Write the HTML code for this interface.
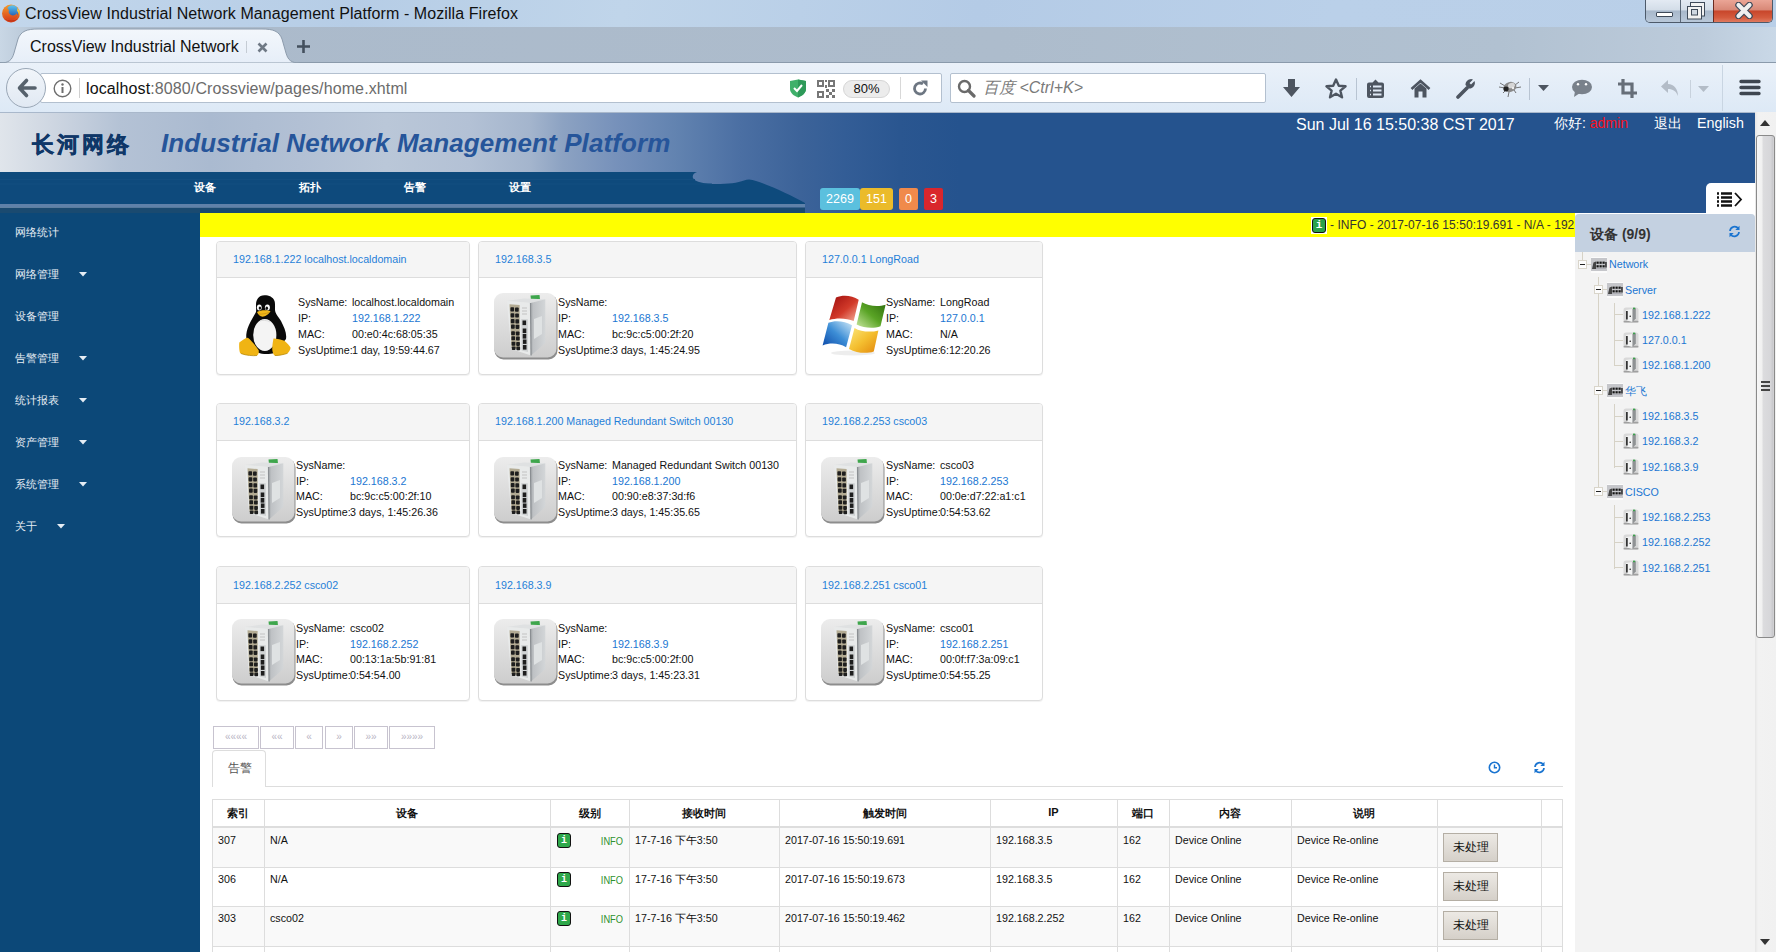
<!DOCTYPE html>
<html><head><meta charset="utf-8">
<style>
*{box-sizing:border-box}
html,body{margin:0;padding:0}
body{width:1776px;height:952px;overflow:hidden;position:relative;font-family:"Liberation Sans",sans-serif;background:#fff;color:#000}
.a{position:absolute}
.nw{white-space:nowrap}
/* chrome */
#titlebar{left:0;top:0;width:1776px;height:27px;background:linear-gradient(100deg,#c3d7ec 0%,#b6cde6 20%,#c0d5ea 35%,#b4cbe6 55%,#bad0e9 75%,#b9cfe8 100%)}
#tabstrip{left:0;top:27px;width:1776px;height:36px;background:linear-gradient(90deg,#c9d7e5 0px,#b9c8d8 30px,#abbacb 80px,#adbccc 1000px,#b1c1d1 1500px,#bccbdb 1700px,#c9d8e7 1776px);border-bottom:1px solid #8a9aab}
#navbar{left:0;top:63px;width:1776px;height:49px;background:linear-gradient(#eaf1f9,#dde9f6)}
/* page */
#header{left:0;top:112px;width:1755px;height:101px;background:linear-gradient(90deg,#e0e5eb 0px,#cfd7e2 50px,#b4c2d5 120px,#aabad0 210px,#b2c0d4 300px,#bac7d8 386px,#b3c1d5 470px,#a4b5cd 530px,#8ca2c2 563px,#7590ba 620px,#6283b0 676px,#4b6fa3 740px,#3c6399 800px,#335d96 845px,#2a5690 900px,#25538e 960px,#25538e 1755px)}
#sidebar{left:0;top:213px;width:200px;height:739px;background:#0c4878}
#yellow{left:200px;top:213px;width:1375px;height:24px;background:#ffff00}
#rpanel{left:1575px;top:214px;width:180px;height:738px;background:#f3f3f3;border-radius:4px 4px 0 0}
#scroll{left:1755px;top:112px;width:21px;height:840px;background:linear-gradient(90deg,#e6e6e6 0,#f2f2f2 3px,#f1f1f1 100%)}
.card{height:134px;border:1px solid #ddd;border-radius:4px;background:#fff;box-shadow:0 1px 1px rgba(0,0,0,.06)}
.ch{height:36px;background:#f5f5f5;border-bottom:1px solid #ddd;border-radius:3px 3px 0 0;position:relative}
.cht{position:absolute;left:16px;top:11px;font-size:10.7px;color:#1f7fd8;white-space:nowrap}
.ct{font-size:10.7px;color:#111;line-height:13px}
.cb{color:#1a76d2}
.pg{height:23px;border:1px solid #c7c3cf;background:#fff;color:#b9b5c4;font-size:10px;line-height:20px;text-align:center;}
.th{font-size:11px;font-weight:bold;text-align:center;color:#111}
.td{font-size:10.7px;color:#111}
.ib{width:14px;height:14px;background:#2ea84a;border:1px solid #111;border-radius:3px;color:#fff;font-size:10px;font-weight:bold;line-height:12px;text-align:center;font-family:"Liberation Mono",monospace}
.btn{width:55px;height:29px;border:1px solid #b4aea4;background:linear-gradient(#ece9e4,#d5d0c9);font-size:12px;line-height:27px;text-align:center;color:#111}
.tl{font-size:10.7px;color:#1a76d2}
</style></head><body>

<div id="titlebar" class="a">
  <svg class="a" style="left:1px;top:3px" width="20" height="20" viewBox="0 0 20 20">
    <defs><linearGradient id="ffg" x1="0" y1="0" x2="0" y2="1"><stop offset="0" stop-color="#5cc6f2"/><stop offset="1" stop-color="#1d4fa8"/></linearGradient>
    <linearGradient id="ffo" x1="0" y1="0" x2="0" y2="1"><stop offset="0" stop-color="#f59a2c"/><stop offset="1" stop-color="#d8401a"/></linearGradient></defs>
    <circle cx="10" cy="10.5" r="9" fill="url(#ffo)"/>
    <ellipse cx="11.3" cy="8.6" rx="6.2" ry="6.4" fill="url(#ffg)"/>
    <path d="M2 9 C3 5 5 3 7 2.5 C6 4 6 6 8 7 C7 9 8 11 10 12 C12 13 15 12 16 10 C17 14 14 17 10 17 C6 17 2.5 14 2 9Z" fill="url(#ffo)"/>
    <path d="M16.5 5 C18.5 7 19.5 10 18.5 13 C18 11 17.5 9 16 8 Z" fill="#f6c640"/>
    <path d="M3 15 C6 19.5 14 19.5 17 15.5 C14 18 7 18.5 3 15Z" fill="#b9301a"/>
  </svg>
  <div class="a nw" style="left:25px;top:5px;font-size:16px;letter-spacing:0.08px;color:#111">CrossView Industrial Network Management Platform - Mozilla Firefox</div>
  <div class="a" style="left:1645px;top:0;width:128px;height:23px;border:1px solid #4d5a6a;border-top:none;border-radius:0 0 5px 5px;overflow:hidden">
    <div class="a" style="left:0;top:0;width:35px;height:22px;background:linear-gradient(#e3eaf3 0%,#d3dde8 45%,#a8b8cb 50%,#b9c8d9 100%);border-right:1px solid #5b6878"></div>
    <div class="a" style="left:35px;top:0;width:33px;height:22px;background:linear-gradient(#e3eaf3 0%,#d3dde8 45%,#a8b8cb 50%,#b9c8d9 100%);border-right:1px solid #6b2a20"></div>
    <div class="a" style="left:68px;top:0;width:60px;height:22px;background:linear-gradient(#eaa596 0%,#d88877 45%,#c8462b 50%,#d45b3e 80%,#e07a60 100%)"></div>
    <div class="a" style="left:10px;top:12px;width:17px;height:5px;background:#fff;border:1px solid #3f4a59;border-radius:1px"></div>
    <svg class="a" style="left:40px;top:0px" width="22" height="21" viewBox="0 0 22 21"><rect x="4.5" y="2.5" width="14" height="13.5" fill="#f2f2f2" stroke="#3f4a59"/><rect x="1.5" y="6.5" width="14" height="12.5" fill="#f2f2f2" stroke="#3f4a59"/><rect x="5.5" y="9.5" width="6" height="5.5" fill="#cfd8e2" stroke="#3f4a59"/></svg>
    
    <svg class="a" style="left:89px;top:2px" width="18" height="17" viewBox="0 0 18 17"><path d="M3.5 3 L14.5 14 M14.5 3 L3.5 14" stroke="#3f4a59" stroke-width="6.5" stroke-linecap="round"/><path d="M3.5 3 L14.5 14 M14.5 3 L3.5 14" stroke="#f0f0f0" stroke-width="4.2" stroke-linecap="round"/></svg>
  </div>
</div>
<div id="tabstrip" class="a">
  <svg class="a" style="left:0;top:0" width="300" height="37" viewBox="0 0 300 37">
    <path d="M0 36 C9 36 12 33 14 26 L18 12 C21 4 27 2 38 2 L262 2 C273 2 279 4 282 12 L286 26 C288 33 291 36 300 36 Z" fill="url(#tabg)" stroke="#8d9cad" stroke-width="1"/>
    <defs><linearGradient id="tabg" x1="0" y1="0" x2="0" y2="1"><stop offset="0" stop-color="#f3f7fc"/><stop offset="1" stop-color="#e6eef8"/></linearGradient></defs>
  </svg>
  <div class="a nw" style="left:30px;top:11px;font-size:16px;color:#111">CrossView Industrial Network</div>
  <div class="a" style="left:246px;top:14px;width:1px;height:12px;background:#c5ccd4"></div>
  <svg class="a" style="left:257px;top:15px" width="11" height="11" viewBox="0 0 11 11"><path d="M1.5 1.5 L9.5 9.5 M9.5 1.5 L1.5 9.5" stroke="#6f7985" stroke-width="2.6"/></svg>
  <svg class="a" style="left:296px;top:12px" width="15" height="15" viewBox="0 0 15 15"><path d="M7.5 1 V14 M1 7.5 H14" stroke="#44505e" stroke-width="2.6"/></svg>
</div>
<div id="navbar" class="a">
  <div class="a" style="left:40px;top:10px;width:902px;height:30px;background:#fff;border:1px solid #b3c0cf;border-radius:2px"></div>
  <div class="a" style="left:6px;top:5px;width:40px;height:40px;border-radius:50%;background:linear-gradient(#f1f5fa,#e1e9f3);border:1px solid #9aa7b6"></div>
  <svg class="a" style="left:16px;top:14px" width="22" height="22" viewBox="0 0 22 22"><path d="M10.5 3.5 L3.5 11 L10.5 18.5 M4.5 11 H19" fill="none" stroke="#56616c" stroke-width="3.6" stroke-linecap="round" stroke-linejoin="round"/></svg>
  <svg class="a" style="left:53px;top:16px" width="19" height="19" viewBox="0 0 19 19"><circle cx="9.5" cy="9.5" r="8.3" fill="none" stroke="#6e6e6e" stroke-width="1.4"/><rect x="8.5" y="8" width="2" height="6" fill="#6e6e6e"/><circle cx="9.5" cy="5.5" r="1.2" fill="#6e6e6e"/></svg>
  <div class="a" style="left:79px;top:15px;width:1px;height:20px;background:#d0d0d0"></div>
  <div class="a nw" style="left:86px;top:17px;font-size:16px;letter-spacing:0.12px;color:#111">localhost<span style="color:#6b6b6b">:8080/Crossview/pages/home.xhtml</span></div>
  <svg class="a" style="left:789px;top:16px" width="18" height="19" viewBox="0 0 18 19"><path d="M1 2 L9 0.5 L17 2 L17 10 C17 14 13 17 9 18.5 C5 17 1 14 1 10 Z" fill="#3fb06a"/><path d="M9 0.5 L17 2 L17 10 C17 14 13 17 9 18.5 Z" fill="#2e9a59"/><path d="M5 9 L8 12 L13 6" fill="none" stroke="#fff" stroke-width="2"/></svg>
  <svg class="a" style="left:817px;top:17px" width="18" height="18" viewBox="0 0 18 18" fill="#777"><path d="M0 0h7v7H0z M2 2v3h3V2z M11 0h7v7h-7z M13 2v3h3V2z M0 11h7v7H0z M2 13v3h3v-3z" fill-rule="evenodd"/><rect x="9" y="9" width="3" height="3"/><rect x="12" y="12" width="3" height="3"/><rect x="15" y="9" width="3" height="3"/><rect x="9" y="15" width="3" height="3"/><rect x="15" y="15" width="3" height="3"/><rect x="8" y="0" width="2" height="2"/><rect x="8" y="5" width="2" height="3"/></svg>
  <div class="a nw" style="left:843px;top:17px;width:47px;height:18px;border-radius:9px;background:#ececec;border:1px solid #d6d6d6;font-size:13px;line-height:16px;text-align:center;color:#111">80%</div>
  <div class="a" style="left:900px;top:14px;width:1px;height:22px;background:#d8d8d8"></div>
  <svg class="a" style="left:912px;top:17px" width="17" height="17" viewBox="0 0 17 17"><path d="M13.5 8.5 A5.5 5.5 0 1 1 11 3.9" fill="none" stroke="#6d7682" stroke-width="2.8"/><path d="M9 0.5 L15.5 0.5 L15.5 7 Z" fill="#6d7682"/></svg>
  <div class="a" style="left:950px;top:10px;width:316px;height:30px;background:#fff;border:1px solid #b3c0cf;border-radius:2px"></div>
  <svg class="a" style="left:957px;top:16px" width="19" height="19" viewBox="0 0 19 19"><circle cx="7.5" cy="7.5" r="5.5" fill="none" stroke="#6a6a6a" stroke-width="2.4"/><path d="M11.5 11.5 L17 17" stroke="#6a6a6a" stroke-width="3.2" stroke-linecap="round"/></svg>
  <div class="a nw" style="left:983px;top:15px;font-size:16px;font-style:italic;color:#7a7a7a">百度 &lt;Ctrl+K&gt;</div>
  <!-- toolbar icons -->
  <svg class="a" style="left:1282px;top:16px" width="19" height="19" viewBox="0 0 19 19"><path d="M6 0 H13 V8 H18 L9.5 18 L1 8 H6 Z" fill="#4d5560"/></svg>
  <svg class="a" style="left:1325px;top:15px" width="22" height="21" viewBox="0 0 22 21"><path d="M11 1.5 L13.8 7.8 L20.5 8.3 L15.4 12.7 L17 19.3 L11 15.8 L5 19.3 L6.6 12.7 L1.5 8.3 L8.2 7.8 Z" fill="none" stroke="#4d5560" stroke-width="2.4" stroke-linejoin="round"/></svg>
  <div class="a" style="left:1356px;top:15px;width:1px;height:22px;background:#b8c4d2"></div>
  <svg class="a" style="left:1366px;top:15px" width="19" height="21" viewBox="0 0 19 21"><path d="M3 4.5 H6.5 L9.5 1.5 L12.5 4.5 H16 A2 2 0 0 1 18 6.5 V18 A2 2 0 0 1 16 20 H3 A2 2 0 0 1 1 18 V6.5 A2 2 0 0 1 3 4.5Z" fill="#4d5560"/><path d="M4 8.5 H5 M4 12.5 H5 M4 16.5 H5" stroke="#dfe9f5" stroke-width="1.6"/><path d="M7 8.5 H15.5 M7 12.5 H15.5 M7 16.5 H15.5" stroke="#dfe9f5" stroke-width="2"/></svg>
  <svg class="a" style="left:1410px;top:16px" width="21" height="19" viewBox="0 0 21 19"><path d="M1.5 10 L10.5 2 L19.5 10" fill="none" stroke="#4d5560" stroke-width="2.6" stroke-linejoin="miter"/><path d="M4.5 9.5 L10.5 4.5 L16.5 9.5 V18.5 H12.5 V12.5 H8.5 V18.5 H4.5 Z" fill="#4d5560"/></svg>
  <svg class="a" style="left:1456px;top:15px" width="20" height="21" viewBox="0 0 20 21"><path d="M2 19 L11 10" stroke="#4d5560" stroke-width="3.6" stroke-linecap="round"/><path d="M9.5 7 A5.5 5.5 0 0 1 17 1.5 L13.5 5 L15 6.5 L18.5 3 A5.5 5.5 0 0 1 13 10.5 Z" fill="#4d5560"/></svg>
  <svg class="a" style="left:1498px;top:14px" width="24" height="22" viewBox="0 0 24 22"><path d="M1 10 L7 11 M2 6 L7 9 M5 16 L8 13 M23 10 L17 11 M21 5 L17 8 M18 16 L16 13 M11 15 L10 20" stroke="#666" stroke-width="0.9"/><ellipse cx="12" cy="10" rx="6.5" ry="5" fill="#8a8a8a" transform="rotate(-15 12 10)"/><ellipse cx="13.5" cy="8.5" rx="3.5" ry="2.6" fill="#d6d6d6" transform="rotate(-15 13.5 8.5)"/><ellipse cx="8" cy="12" rx="2.6" ry="2.4" fill="#222"/><circle cx="15" cy="11" r="1.2" fill="#eee"/></svg>
  <div class="a" style="left:1529px;top:15px;width:1px;height:22px;background:#b8c4d2"></div>
  <svg class="a" style="left:1538px;top:22px" width="11" height="7" viewBox="0 0 11 7"><path d="M0 0 H11 L5.5 6 Z" fill="#4d5560"/></svg>
  <svg class="a" style="left:1571px;top:16px" width="22" height="19" viewBox="0 0 22 19"><ellipse cx="11" cy="8" rx="10" ry="7.3" fill="#79818b"/><path d="M4 12 L3 18 L9 14 Z" fill="#79818b"/><circle cx="7" cy="5.3" r="1.2" fill="#fff"/><circle cx="15" cy="5.3" r="1.2" fill="#fff"/></svg>
  <svg class="a" style="left:1618px;top:16px" width="19" height="19" viewBox="0 0 19 19"><path d="M5 0 V14 H19 M0 5 H14 V19" fill="none" stroke="#666e78" stroke-width="3.2"/></svg>
  <svg class="a" style="left:1660px;top:16px" width="21" height="19" viewBox="0 0 21 19"><path d="M8 1 L1 7.5 L8 14 V10 C13 10 16 12 18 17 C18 10 14 5 8 5 Z" fill="#b3bcc7"/></svg>
  <div class="a" style="left:1690px;top:17px;width:1px;height:18px;background:#c8d2dd"></div>
  <svg class="a" style="left:1698px;top:23px" width="11" height="6" viewBox="0 0 11 6"><path d="M0 0 H11 L5.5 6 Z" fill="#b3bcc7"/></svg>
  <div class="a" style="left:1722px;top:2px;width:1px;height:46px;background:#c9d5e2"></div>
  <svg class="a" style="left:1739px;top:16px" width="22" height="17" viewBox="0 0 22 17"><path d="M2 2.5 H20 M2 8.5 H20 M2 14.5 H20" stroke="#3e4650" stroke-width="3.4" stroke-linecap="round"/></svg>
</div>

<div id="header" class="a">
  <div class="a" style="left:0;top:0;width:1755px;height:1px;background:#a9b8cb"></div>
  <div class="a nw" style="left:32px;top:18px;font-size:22px;font-weight:bold;letter-spacing:3px;-webkit-text-stroke:0.5px #0f3768;color:#0f3768">长河网络</div>
  <div class="a nw" style="left:161px;top:16px;font-size:26px;font-weight:bold;font-style:italic;color:#26559a;letter-spacing:0.1px">Industrial Network Management Platform</div>
  <svg class="a" style="left:0;top:59px" width="810" height="42" viewBox="0 0 810 42">
    <path d="M0 1 H697 C694 2 692 4 693 7 C695 11 705 13 716 13 C728 13 738 12 744 9.5 C748 8 752 8.5 756 10 C772 15 792 25 805 32 L805 33 H0 Z" fill="#0e4a7c"/>
    <path d="M0 8.5 H695 M0 13 H712" stroke="#134e80" stroke-width="1"/>
    <rect x="0" y="33" width="805" height="3.6" fill="#5f81a9"/>
    <rect x="0" y="36.6" width="805" height="5.4" fill="#1a4a70"/>
  </svg>
  <div class="a nw" style="left:194px;top:68px;font-size:11px;font-weight:bold;color:#fff">设备</div>
  <div class="a nw" style="left:299px;top:68px;font-size:11px;font-weight:bold;color:#fff">拓扑</div>
  <div class="a nw" style="left:404px;top:68px;font-size:11px;font-weight:bold;color:#fff">告警</div>
  <div class="a nw" style="left:509px;top:68px;font-size:11px;font-weight:bold;color:#fff">设置</div>
  <div class="a nw" style="left:820px;top:76px;width:40px;height:22px;background:#5bc0de;border-radius:3px;color:#fff;font-size:12.5px;line-height:22px;text-align:center">2269</div>
  <div class="a nw" style="left:860px;top:76px;width:33px;height:22px;background:#ebbb2a;border-radius:3px;color:#fff;font-size:12.5px;line-height:22px;text-align:center">151</div>
  <div class="a nw" style="left:899px;top:76px;width:19px;height:22px;background:#f08a4b;border-radius:2px;color:#fff;font-size:12.5px;line-height:22px;text-align:center">0</div>
  <div class="a nw" style="left:924px;top:76px;width:19px;height:22px;background:#d9262c;border-radius:2px;color:#fff;font-size:12.5px;line-height:22px;text-align:center">3</div>
  <div class="a nw" style="left:1296px;top:4px;font-size:16px;color:#fff">Sun Jul 16 15:50:38 CST 2017</div>
  <div class="a nw" style="left:1554px;top:3px;font-size:14px;color:#fff">你好: <span style="color:#f8101c">admin</span></div>
  <div class="a nw" style="left:1654px;top:3px;font-size:14px;color:#fff">退出</div>
  <div class="a nw" style="left:1697px;top:3px;font-size:14.3px;color:#fff">English</div>
  <div class="a" style="left:1706px;top:71px;width:49px;height:30px;background:#fff;border-radius:5px 0 0 0"></div>
  <svg class="a" style="left:1716px;top:80px" width="28" height="15" viewBox="0 0 28 15"><path d="M1 1.5 H3 M5 1.5 H16 M1 5.5 H3 M5 5.5 H16 M1 9.5 H3 M5 9.5 H16 M1 13.5 H3 M5 13.5 H16" stroke="#111" stroke-width="2.4"/><path d="M19 1 L25 7.5 L19 14" fill="none" stroke="#111" stroke-width="1.8"/></svg>
</div>
<div id="sidebar" class="a"><div class="a nw" style="left:15px;top:12px;font-size:11px;color:#e6edf4">网络统计</div><div class="a nw" style="left:15px;top:54px;font-size:11px;color:#e6edf4">网络管理</div><svg class="a" style="left:79px;top:59px" width="8" height="5" viewBox="0 0 8 5"><path d="M0 0 H8 L4 4.5Z" fill="#e6edf4"/></svg><div class="a nw" style="left:15px;top:96px;font-size:11px;color:#e6edf4">设备管理</div><div class="a nw" style="left:15px;top:138px;font-size:11px;color:#e6edf4">告警管理</div><svg class="a" style="left:79px;top:143px" width="8" height="5" viewBox="0 0 8 5"><path d="M0 0 H8 L4 4.5Z" fill="#e6edf4"/></svg><div class="a nw" style="left:15px;top:180px;font-size:11px;color:#e6edf4">统计报表</div><svg class="a" style="left:79px;top:185px" width="8" height="5" viewBox="0 0 8 5"><path d="M0 0 H8 L4 4.5Z" fill="#e6edf4"/></svg><div class="a nw" style="left:15px;top:222px;font-size:11px;color:#e6edf4">资产管理</div><svg class="a" style="left:79px;top:227px" width="8" height="5" viewBox="0 0 8 5"><path d="M0 0 H8 L4 4.5Z" fill="#e6edf4"/></svg><div class="a nw" style="left:15px;top:264px;font-size:11px;color:#e6edf4">系统管理</div><svg class="a" style="left:79px;top:269px" width="8" height="5" viewBox="0 0 8 5"><path d="M0 0 H8 L4 4.5Z" fill="#e6edf4"/></svg><div class="a nw" style="left:15px;top:306px;font-size:11px;color:#e6edf4">关于</div><svg class="a" style="left:57px;top:311px" width="8" height="5" viewBox="0 0 8 5"><path d="M0 0 H8 L4 4.5Z" fill="#e6edf4"/></svg></div>
<div id="yellow" class="a" style="overflow:hidden">
  <div class="a" style="left:1111px;top:4px;width:16px;height:17px;background:#fff"></div>
  <div class="a" style="left:1112px;top:5px;width:14px;height:15px;background:#2aa14a;border:1px solid #111;border-radius:3px;color:#fff;font-size:11px;font-weight:bold;line-height:13px;text-align:center;font-family:'Liberation Mono',monospace">i</div>
  <div class="a nw" style="left:1130px;top:5px;font-size:12px;letter-spacing:0.05px;color:#333">- INFO - 2017-07-16 15:50:19.691 - N/A - 192.168.3.5 - Device Online</div>
</div>
<!--CARDS-->
<div class="a card" style="left:216px;top:241px;width:254px;"><div class="ch" ><span class="cht" >192.168.1.222 localhost.localdomain</span></div></div>
<svg class="a" style="left:234px;top:293px" width="64" height="66" viewBox="0 0 64 66">
<path d="M30.5 2.3 C24.5 2.3 22 7 22 12 C22 15 22.3 17 22 19 C19 25 13 33 12.3 41.6 C12 46 13 49 14 50 L24 59.5 C28 61.5 36 61.5 40 60 L52 46 C53 40 50 34 47 28 C44 23 41.5 21 41 17 C41 13 41.2 10 40.5 8 C39 4 35 2.3 30.5 2.3Z" fill="#0a0a0a"/>
<ellipse cx="30.8" cy="42" rx="11.6" ry="16" fill="#f4f4f4"/>
<path d="M26 28 C28 27 33 27 36 29" stroke="#d8d8d8" stroke-width="0.8" fill="none"/>
<ellipse cx="25.3" cy="14.4" rx="2.4" ry="3" fill="#fff"/><ellipse cx="33.4" cy="14.6" rx="2.5" ry="3" fill="#fff"/>
<ellipse cx="25.9" cy="15.1" rx="1.2" ry="1.7" fill="#111"/><ellipse cx="32.8" cy="15.3" rx="1.3" ry="1.7" fill="#111"/>
<path d="M23 19 C26 17 33 16.5 36.5 18.3 C35 21 31 23.8 28.6 23.8 C26 23.5 24 21.5 23 19Z" fill="#f2b81a"/>
<path d="M25 21 C28 21.5 32 20.5 35 19.5" stroke="#c08a10" stroke-width="0.6" fill="none"/>
<path d="M5.3 49.4 C8 47.5 11 45 13.9 44.7 C17 47 21 52 24.7 57.2 C25 59.5 24.5 61.5 23.2 62.6 C18 63 10 62 6.1 60.3 C5 57 5 52 5.3 49.4Z" fill="#f0b414"/>
<path d="M39.5 45.5 C43 45.5 47.5 46.5 50.4 47.8 C53 50 55.5 52.5 56.6 54.8 C56.5 57 55 59 53.5 60.3 C49 62 44 62.8 40.3 62.6 C38.5 60 38 57 38.3 54.1 C38.5 51 39 48 39.5 45.5Z" fill="#f0b414"/>
<path d="M7 60.5 C12 62.5 19 63 23 62.5 M41 62.5 C45 62.6 50 61.5 53.5 60.3" stroke="#b88a0a" stroke-width="0.8" fill="none"/>
</svg>
<div class="a nw ct" style="left:298px;top:296px">SysName:</div>
<div class="a nw ct" style="left:352px;top:296px">localhost.localdomain</div>
<div class="a nw ct" style="left:298px;top:312px">IP:</div>
<div class="a nw ct cb" style="left:352px;top:312px">192.168.1.222</div>
<div class="a nw ct" style="left:298px;top:328px">MAC:</div>
<div class="a nw ct" style="left:352px;top:328px">00:e0:4c:68:05:35</div>
<div class="a nw ct" style="left:298px;top:344px">SysUptime:</div>
<div class="a nw ct" style="left:352px;top:344px">1 day, 19:59:44.67</div>
<div class="a card" style="left:478px;top:241px;width:319px;"><div class="ch" ><span class="cht" >192.168.3.5</span></div></div>
<svg class="a" style="left:494px;top:293px" width="64" height="67" viewBox="0 0 64 67">
<defs><linearGradient id="sbg2" x1="0" y1="0" x2="0" y2="1"><stop offset="0" stop-color="#ececec"/><stop offset="1" stop-color="#cdcdcd"/></linearGradient>
<linearGradient id="sside2" x1="0" y1="0" x2="1" y2="0"><stop offset="0" stop-color="#a4a8ab"/><stop offset="0.2" stop-color="#bfc2c5"/><stop offset="1" stop-color="#d3d6d8"/></linearGradient></defs>
<rect x="0.5" y="1.5" width="63" height="65" rx="9" fill="#8d8d8d"/>
<rect x="0" y="0" width="62.5" height="64.5" rx="9" fill="url(#sbg2)"/>
<polygon points="36.5,2.5 45.5,2 46,6.5 37,7" fill="#3ea64c"/>
<polygon points="13,8 30,5.5 51.3,6.3 36.5,10" fill="#dfe1e2"/>
<polygon points="36.5,10 51.3,6.3 51.3,50 37,62.6" fill="url(#sside2)"/>
<polygon points="40,26 48,23 48,41 40,46" fill="#dfe2e3"/>
<polygon points="13,8 36.5,10 37,62.6 17.2,55.9" fill="#e8eaea"/>
<polygon points="15.5,11.3 25.6,12 25.9,57 17.4,54.5" fill="#b3ab93"/>
<polygon points="27.3,26 33.8,26.3 34,59 27.6,57.5" fill="#cfd2d3"/>
<g fill="#1e1e1e">
<rect x="16.4" y="14.3" width="3.7" height="4.2" rx="0.8"/><rect x="21" y="14.5" width="3.7" height="4.2" rx="0.8"/>
<rect x="16.6" y="20.2" width="3.7" height="4.2" rx="0.8"/><rect x="21.2" y="20.4" width="3.7" height="4.2" rx="0.8"/>
<rect x="16.8" y="26.1" width="3.7" height="4.2" rx="0.8"/><rect x="21.4" y="26.3" width="3.7" height="4.2" rx="0.8"/>
<rect x="17" y="31.5" width="3.7" height="4.2" rx="0.8"/><rect x="21.6" y="31.7" width="3.7" height="4.2" rx="0.8"/>
<rect x="17.2" y="38.2" width="3.7" height="4" rx="0.8"/><rect x="21.8" y="38.4" width="3.7" height="4" rx="0.8"/>
<rect x="17.4" y="43.3" width="3.7" height="4" rx="0.8"/><rect x="22" y="43.5" width="3.7" height="4" rx="0.8"/>
<rect x="17.6" y="48.7" width="3.7" height="4" rx="0.8"/><rect x="22.2" y="48.9" width="3.7" height="4" rx="0.8"/>
<rect x="17.8" y="53.4" width="3.7" height="3.6" rx="0.8"/><rect x="22.4" y="53.6" width="3.7" height="3.6" rx="0.8"/>
<rect x="28.5" y="27.5" width="3.6" height="4.6"/>
<rect x="28.7" y="35.5" width="3.6" height="4.6"/><rect x="28.7" y="41" width="3.6" height="4.6"/>
<rect x="28.9" y="46.5" width="3.6" height="4.4"/><rect x="28.9" y="52" width="3.6" height="4.6"/>
</g>
<path d="M28 15 H33 M28 18 H33 M28 21 H33" stroke="#aaa" stroke-width="0.6"/>
<path d="M36.5 10 L37 62.6" stroke="#8a8e92" stroke-width="1.2"/>
</svg>
<div class="a nw ct" style="left:558px;top:296px">SysName:</div>
<div class="a nw ct" style="left:612px;top:296px"></div>
<div class="a nw ct" style="left:558px;top:312px">IP:</div>
<div class="a nw ct cb" style="left:612px;top:312px">192.168.3.5</div>
<div class="a nw ct" style="left:558px;top:328px">MAC:</div>
<div class="a nw ct" style="left:612px;top:328px">bc:9c:c5:00:2f:20</div>
<div class="a nw ct" style="left:558px;top:344px">SysUptime:</div>
<div class="a nw ct" style="left:612px;top:344px">3 days, 1:45:24.95</div>
<div class="a card" style="left:805px;top:241px;width:238px;"><div class="ch" ><span class="cht" >127.0.0.1 LongRoad</span></div></div>
<svg class="a" style="left:820px;top:292px" width="68" height="66" viewBox="0 0 68 66">
<defs>
<linearGradient id="wr3" x1="0" y1="0" x2="1" y2="1"><stop offset="0" stop-color="#9c0c0c"/><stop offset="0.55" stop-color="#d23a2a"/><stop offset="1" stop-color="#f6b4a0"/></linearGradient>
<linearGradient id="wg3" x1="1" y1="0" x2="0" y2="1"><stop offset="0" stop-color="#2f6e0c"/><stop offset="0.5" stop-color="#5aa426"/><stop offset="1" stop-color="#c8e6a0"/></linearGradient>
<linearGradient id="wb3" x1="0" y1="1" x2="1" y2="0"><stop offset="0" stop-color="#0b48a8"/><stop offset="0.5" stop-color="#3d8ed6"/><stop offset="1" stop-color="#cfe9f8"/></linearGradient>
<linearGradient id="wy3" x1="0" y1="0" x2="1" y2="1"><stop offset="0" stop-color="#fbe67a"/><stop offset="0.5" stop-color="#f4bf30"/><stop offset="1" stop-color="#e2870c"/></linearGradient>
</defs>
<ellipse cx="33" cy="61" rx="22" ry="2.5" fill="#000" opacity="0.07"/>
<path d="M16 5.6 C23 2.5 32 3.5 38.7 7.7 L33.7 29.1 C27 26 17 25.5 9.3 27.9 Z" fill="url(#wr3)"/>
<path d="M42 10.2 C48 14 58 15 65.6 12.7 L60.5 34.2 C53 37 44 36 36.6 32.5 Z" fill="url(#wg3)"/>
<path d="M8.4 30.8 C15 28 25 29 32 33.3 L26.1 55.2 C19 51 10 50.5 2.6 53.5 Z" fill="url(#wb3)"/>
<path d="M34.5 35.9 C41 40 51 40.5 58.4 38.4 L53.8 59.4 C46 62 37 61 29 56.9 Z" fill="url(#wy3)"/>
</svg>
<div class="a nw ct" style="left:886px;top:296px">SysName:</div>
<div class="a nw ct" style="left:940px;top:296px">LongRoad</div>
<div class="a nw ct" style="left:886px;top:312px">IP:</div>
<div class="a nw ct cb" style="left:940px;top:312px">127.0.0.1</div>
<div class="a nw ct" style="left:886px;top:328px">MAC:</div>
<div class="a nw ct" style="left:940px;top:328px">N/A</div>
<div class="a nw ct" style="left:886px;top:344px">SysUptime:</div>
<div class="a nw ct" style="left:940px;top:344px">6:12:20.26</div>
<div class="a card" style="left:216px;top:403px;width:254px;"><div class="ch" style="height:37px"><span class="cht" >192.168.3.2</span></div></div>
<svg class="a" style="left:232px;top:457px" width="64" height="67" viewBox="0 0 64 67">
<defs><linearGradient id="sbg4" x1="0" y1="0" x2="0" y2="1"><stop offset="0" stop-color="#ececec"/><stop offset="1" stop-color="#cdcdcd"/></linearGradient>
<linearGradient id="sside4" x1="0" y1="0" x2="1" y2="0"><stop offset="0" stop-color="#a4a8ab"/><stop offset="0.2" stop-color="#bfc2c5"/><stop offset="1" stop-color="#d3d6d8"/></linearGradient></defs>
<rect x="0.5" y="1.5" width="63" height="65" rx="9" fill="#8d8d8d"/>
<rect x="0" y="0" width="62.5" height="64.5" rx="9" fill="url(#sbg4)"/>
<polygon points="36.5,2.5 45.5,2 46,6.5 37,7" fill="#3ea64c"/>
<polygon points="13,8 30,5.5 51.3,6.3 36.5,10" fill="#dfe1e2"/>
<polygon points="36.5,10 51.3,6.3 51.3,50 37,62.6" fill="url(#sside4)"/>
<polygon points="40,26 48,23 48,41 40,46" fill="#dfe2e3"/>
<polygon points="13,8 36.5,10 37,62.6 17.2,55.9" fill="#e8eaea"/>
<polygon points="15.5,11.3 25.6,12 25.9,57 17.4,54.5" fill="#b3ab93"/>
<polygon points="27.3,26 33.8,26.3 34,59 27.6,57.5" fill="#cfd2d3"/>
<g fill="#1e1e1e">
<rect x="16.4" y="14.3" width="3.7" height="4.2" rx="0.8"/><rect x="21" y="14.5" width="3.7" height="4.2" rx="0.8"/>
<rect x="16.6" y="20.2" width="3.7" height="4.2" rx="0.8"/><rect x="21.2" y="20.4" width="3.7" height="4.2" rx="0.8"/>
<rect x="16.8" y="26.1" width="3.7" height="4.2" rx="0.8"/><rect x="21.4" y="26.3" width="3.7" height="4.2" rx="0.8"/>
<rect x="17" y="31.5" width="3.7" height="4.2" rx="0.8"/><rect x="21.6" y="31.7" width="3.7" height="4.2" rx="0.8"/>
<rect x="17.2" y="38.2" width="3.7" height="4" rx="0.8"/><rect x="21.8" y="38.4" width="3.7" height="4" rx="0.8"/>
<rect x="17.4" y="43.3" width="3.7" height="4" rx="0.8"/><rect x="22" y="43.5" width="3.7" height="4" rx="0.8"/>
<rect x="17.6" y="48.7" width="3.7" height="4" rx="0.8"/><rect x="22.2" y="48.9" width="3.7" height="4" rx="0.8"/>
<rect x="17.8" y="53.4" width="3.7" height="3.6" rx="0.8"/><rect x="22.4" y="53.6" width="3.7" height="3.6" rx="0.8"/>
<rect x="28.5" y="27.5" width="3.6" height="4.6"/>
<rect x="28.7" y="35.5" width="3.6" height="4.6"/><rect x="28.7" y="41" width="3.6" height="4.6"/>
<rect x="28.9" y="46.5" width="3.6" height="4.4"/><rect x="28.9" y="52" width="3.6" height="4.6"/>
</g>
<path d="M28 15 H33 M28 18 H33 M28 21 H33" stroke="#aaa" stroke-width="0.6"/>
<path d="M36.5 10 L37 62.6" stroke="#8a8e92" stroke-width="1.2"/>
</svg>
<div class="a nw ct" style="left:296px;top:459px">SysName:</div>
<div class="a nw ct" style="left:350px;top:459px"></div>
<div class="a nw ct" style="left:296px;top:475px">IP:</div>
<div class="a nw ct cb" style="left:350px;top:475px">192.168.3.2</div>
<div class="a nw ct" style="left:296px;top:490px">MAC:</div>
<div class="a nw ct" style="left:350px;top:490px">bc:9c:c5:00:2f:10</div>
<div class="a nw ct" style="left:296px;top:506px">SysUptime:</div>
<div class="a nw ct" style="left:350px;top:506px">3 days, 1:45:26.36</div>
<div class="a card" style="left:478px;top:403px;width:319px;"><div class="ch" style="height:37px"><span class="cht" >192.168.1.200 Managed Redundant Switch 00130</span></div></div>
<svg class="a" style="left:494px;top:457px" width="64" height="67" viewBox="0 0 64 67">
<defs><linearGradient id="sbg5" x1="0" y1="0" x2="0" y2="1"><stop offset="0" stop-color="#ececec"/><stop offset="1" stop-color="#cdcdcd"/></linearGradient>
<linearGradient id="sside5" x1="0" y1="0" x2="1" y2="0"><stop offset="0" stop-color="#a4a8ab"/><stop offset="0.2" stop-color="#bfc2c5"/><stop offset="1" stop-color="#d3d6d8"/></linearGradient></defs>
<rect x="0.5" y="1.5" width="63" height="65" rx="9" fill="#8d8d8d"/>
<rect x="0" y="0" width="62.5" height="64.5" rx="9" fill="url(#sbg5)"/>
<polygon points="36.5,2.5 45.5,2 46,6.5 37,7" fill="#3ea64c"/>
<polygon points="13,8 30,5.5 51.3,6.3 36.5,10" fill="#dfe1e2"/>
<polygon points="36.5,10 51.3,6.3 51.3,50 37,62.6" fill="url(#sside5)"/>
<polygon points="40,26 48,23 48,41 40,46" fill="#dfe2e3"/>
<polygon points="13,8 36.5,10 37,62.6 17.2,55.9" fill="#e8eaea"/>
<polygon points="15.5,11.3 25.6,12 25.9,57 17.4,54.5" fill="#b3ab93"/>
<polygon points="27.3,26 33.8,26.3 34,59 27.6,57.5" fill="#cfd2d3"/>
<g fill="#1e1e1e">
<rect x="16.4" y="14.3" width="3.7" height="4.2" rx="0.8"/><rect x="21" y="14.5" width="3.7" height="4.2" rx="0.8"/>
<rect x="16.6" y="20.2" width="3.7" height="4.2" rx="0.8"/><rect x="21.2" y="20.4" width="3.7" height="4.2" rx="0.8"/>
<rect x="16.8" y="26.1" width="3.7" height="4.2" rx="0.8"/><rect x="21.4" y="26.3" width="3.7" height="4.2" rx="0.8"/>
<rect x="17" y="31.5" width="3.7" height="4.2" rx="0.8"/><rect x="21.6" y="31.7" width="3.7" height="4.2" rx="0.8"/>
<rect x="17.2" y="38.2" width="3.7" height="4" rx="0.8"/><rect x="21.8" y="38.4" width="3.7" height="4" rx="0.8"/>
<rect x="17.4" y="43.3" width="3.7" height="4" rx="0.8"/><rect x="22" y="43.5" width="3.7" height="4" rx="0.8"/>
<rect x="17.6" y="48.7" width="3.7" height="4" rx="0.8"/><rect x="22.2" y="48.9" width="3.7" height="4" rx="0.8"/>
<rect x="17.8" y="53.4" width="3.7" height="3.6" rx="0.8"/><rect x="22.4" y="53.6" width="3.7" height="3.6" rx="0.8"/>
<rect x="28.5" y="27.5" width="3.6" height="4.6"/>
<rect x="28.7" y="35.5" width="3.6" height="4.6"/><rect x="28.7" y="41" width="3.6" height="4.6"/>
<rect x="28.9" y="46.5" width="3.6" height="4.4"/><rect x="28.9" y="52" width="3.6" height="4.6"/>
</g>
<path d="M28 15 H33 M28 18 H33 M28 21 H33" stroke="#aaa" stroke-width="0.6"/>
<path d="M36.5 10 L37 62.6" stroke="#8a8e92" stroke-width="1.2"/>
</svg>
<div class="a nw ct" style="left:558px;top:459px">SysName:</div>
<div class="a nw ct" style="left:612px;top:459px">Managed Redundant Switch 00130</div>
<div class="a nw ct" style="left:558px;top:475px">IP:</div>
<div class="a nw ct cb" style="left:612px;top:475px">192.168.1.200</div>
<div class="a nw ct" style="left:558px;top:490px">MAC:</div>
<div class="a nw ct" style="left:612px;top:490px">00:90:e8:37:3d:f6</div>
<div class="a nw ct" style="left:558px;top:506px">SysUptime:</div>
<div class="a nw ct" style="left:612px;top:506px">3 days, 1:45:35.65</div>
<div class="a card" style="left:805px;top:403px;width:238px;"><div class="ch" style="height:37px"><span class="cht" >192.168.2.253 csco03</span></div></div>
<svg class="a" style="left:821px;top:457px" width="64" height="67" viewBox="0 0 64 67">
<defs><linearGradient id="sbg6" x1="0" y1="0" x2="0" y2="1"><stop offset="0" stop-color="#ececec"/><stop offset="1" stop-color="#cdcdcd"/></linearGradient>
<linearGradient id="sside6" x1="0" y1="0" x2="1" y2="0"><stop offset="0" stop-color="#a4a8ab"/><stop offset="0.2" stop-color="#bfc2c5"/><stop offset="1" stop-color="#d3d6d8"/></linearGradient></defs>
<rect x="0.5" y="1.5" width="63" height="65" rx="9" fill="#8d8d8d"/>
<rect x="0" y="0" width="62.5" height="64.5" rx="9" fill="url(#sbg6)"/>
<polygon points="36.5,2.5 45.5,2 46,6.5 37,7" fill="#3ea64c"/>
<polygon points="13,8 30,5.5 51.3,6.3 36.5,10" fill="#dfe1e2"/>
<polygon points="36.5,10 51.3,6.3 51.3,50 37,62.6" fill="url(#sside6)"/>
<polygon points="40,26 48,23 48,41 40,46" fill="#dfe2e3"/>
<polygon points="13,8 36.5,10 37,62.6 17.2,55.9" fill="#e8eaea"/>
<polygon points="15.5,11.3 25.6,12 25.9,57 17.4,54.5" fill="#b3ab93"/>
<polygon points="27.3,26 33.8,26.3 34,59 27.6,57.5" fill="#cfd2d3"/>
<g fill="#1e1e1e">
<rect x="16.4" y="14.3" width="3.7" height="4.2" rx="0.8"/><rect x="21" y="14.5" width="3.7" height="4.2" rx="0.8"/>
<rect x="16.6" y="20.2" width="3.7" height="4.2" rx="0.8"/><rect x="21.2" y="20.4" width="3.7" height="4.2" rx="0.8"/>
<rect x="16.8" y="26.1" width="3.7" height="4.2" rx="0.8"/><rect x="21.4" y="26.3" width="3.7" height="4.2" rx="0.8"/>
<rect x="17" y="31.5" width="3.7" height="4.2" rx="0.8"/><rect x="21.6" y="31.7" width="3.7" height="4.2" rx="0.8"/>
<rect x="17.2" y="38.2" width="3.7" height="4" rx="0.8"/><rect x="21.8" y="38.4" width="3.7" height="4" rx="0.8"/>
<rect x="17.4" y="43.3" width="3.7" height="4" rx="0.8"/><rect x="22" y="43.5" width="3.7" height="4" rx="0.8"/>
<rect x="17.6" y="48.7" width="3.7" height="4" rx="0.8"/><rect x="22.2" y="48.9" width="3.7" height="4" rx="0.8"/>
<rect x="17.8" y="53.4" width="3.7" height="3.6" rx="0.8"/><rect x="22.4" y="53.6" width="3.7" height="3.6" rx="0.8"/>
<rect x="28.5" y="27.5" width="3.6" height="4.6"/>
<rect x="28.7" y="35.5" width="3.6" height="4.6"/><rect x="28.7" y="41" width="3.6" height="4.6"/>
<rect x="28.9" y="46.5" width="3.6" height="4.4"/><rect x="28.9" y="52" width="3.6" height="4.6"/>
</g>
<path d="M28 15 H33 M28 18 H33 M28 21 H33" stroke="#aaa" stroke-width="0.6"/>
<path d="M36.5 10 L37 62.6" stroke="#8a8e92" stroke-width="1.2"/>
</svg>
<div class="a nw ct" style="left:886px;top:459px">SysName:</div>
<div class="a nw ct" style="left:940px;top:459px">csco03</div>
<div class="a nw ct" style="left:886px;top:475px">IP:</div>
<div class="a nw ct cb" style="left:940px;top:475px">192.168.2.253</div>
<div class="a nw ct" style="left:886px;top:490px">MAC:</div>
<div class="a nw ct" style="left:940px;top:490px">00:0e:d7:22:a1:c1</div>
<div class="a nw ct" style="left:886px;top:506px">SysUptime:</div>
<div class="a nw ct" style="left:940px;top:506px">0:54:53.62</div>
<div class="a card" style="left:216px;top:566px;width:254px;height:135px;"><div class="ch" style="height:37px"><span class="cht" style="top:12px">192.168.2.252 csco02</span></div></div>
<svg class="a" style="left:232px;top:619px" width="64" height="67" viewBox="0 0 64 67">
<defs><linearGradient id="sbg7" x1="0" y1="0" x2="0" y2="1"><stop offset="0" stop-color="#ececec"/><stop offset="1" stop-color="#cdcdcd"/></linearGradient>
<linearGradient id="sside7" x1="0" y1="0" x2="1" y2="0"><stop offset="0" stop-color="#a4a8ab"/><stop offset="0.2" stop-color="#bfc2c5"/><stop offset="1" stop-color="#d3d6d8"/></linearGradient></defs>
<rect x="0.5" y="1.5" width="63" height="65" rx="9" fill="#8d8d8d"/>
<rect x="0" y="0" width="62.5" height="64.5" rx="9" fill="url(#sbg7)"/>
<polygon points="36.5,2.5 45.5,2 46,6.5 37,7" fill="#3ea64c"/>
<polygon points="13,8 30,5.5 51.3,6.3 36.5,10" fill="#dfe1e2"/>
<polygon points="36.5,10 51.3,6.3 51.3,50 37,62.6" fill="url(#sside7)"/>
<polygon points="40,26 48,23 48,41 40,46" fill="#dfe2e3"/>
<polygon points="13,8 36.5,10 37,62.6 17.2,55.9" fill="#e8eaea"/>
<polygon points="15.5,11.3 25.6,12 25.9,57 17.4,54.5" fill="#b3ab93"/>
<polygon points="27.3,26 33.8,26.3 34,59 27.6,57.5" fill="#cfd2d3"/>
<g fill="#1e1e1e">
<rect x="16.4" y="14.3" width="3.7" height="4.2" rx="0.8"/><rect x="21" y="14.5" width="3.7" height="4.2" rx="0.8"/>
<rect x="16.6" y="20.2" width="3.7" height="4.2" rx="0.8"/><rect x="21.2" y="20.4" width="3.7" height="4.2" rx="0.8"/>
<rect x="16.8" y="26.1" width="3.7" height="4.2" rx="0.8"/><rect x="21.4" y="26.3" width="3.7" height="4.2" rx="0.8"/>
<rect x="17" y="31.5" width="3.7" height="4.2" rx="0.8"/><rect x="21.6" y="31.7" width="3.7" height="4.2" rx="0.8"/>
<rect x="17.2" y="38.2" width="3.7" height="4" rx="0.8"/><rect x="21.8" y="38.4" width="3.7" height="4" rx="0.8"/>
<rect x="17.4" y="43.3" width="3.7" height="4" rx="0.8"/><rect x="22" y="43.5" width="3.7" height="4" rx="0.8"/>
<rect x="17.6" y="48.7" width="3.7" height="4" rx="0.8"/><rect x="22.2" y="48.9" width="3.7" height="4" rx="0.8"/>
<rect x="17.8" y="53.4" width="3.7" height="3.6" rx="0.8"/><rect x="22.4" y="53.6" width="3.7" height="3.6" rx="0.8"/>
<rect x="28.5" y="27.5" width="3.6" height="4.6"/>
<rect x="28.7" y="35.5" width="3.6" height="4.6"/><rect x="28.7" y="41" width="3.6" height="4.6"/>
<rect x="28.9" y="46.5" width="3.6" height="4.4"/><rect x="28.9" y="52" width="3.6" height="4.6"/>
</g>
<path d="M28 15 H33 M28 18 H33 M28 21 H33" stroke="#aaa" stroke-width="0.6"/>
<path d="M36.5 10 L37 62.6" stroke="#8a8e92" stroke-width="1.2"/>
</svg>
<div class="a nw ct" style="left:296px;top:622px">SysName:</div>
<div class="a nw ct" style="left:350px;top:622px">csco02</div>
<div class="a nw ct" style="left:296px;top:638px">IP:</div>
<div class="a nw ct cb" style="left:350px;top:638px">192.168.2.252</div>
<div class="a nw ct" style="left:296px;top:653px">MAC:</div>
<div class="a nw ct" style="left:350px;top:653px">00:13:1a:5b:91:81</div>
<div class="a nw ct" style="left:296px;top:669px">SysUptime:</div>
<div class="a nw ct" style="left:350px;top:669px">0:54:54.00</div>
<div class="a card" style="left:478px;top:566px;width:319px;height:135px;"><div class="ch" style="height:37px"><span class="cht" style="top:12px">192.168.3.9</span></div></div>
<svg class="a" style="left:494px;top:619px" width="64" height="67" viewBox="0 0 64 67">
<defs><linearGradient id="sbg8" x1="0" y1="0" x2="0" y2="1"><stop offset="0" stop-color="#ececec"/><stop offset="1" stop-color="#cdcdcd"/></linearGradient>
<linearGradient id="sside8" x1="0" y1="0" x2="1" y2="0"><stop offset="0" stop-color="#a4a8ab"/><stop offset="0.2" stop-color="#bfc2c5"/><stop offset="1" stop-color="#d3d6d8"/></linearGradient></defs>
<rect x="0.5" y="1.5" width="63" height="65" rx="9" fill="#8d8d8d"/>
<rect x="0" y="0" width="62.5" height="64.5" rx="9" fill="url(#sbg8)"/>
<polygon points="36.5,2.5 45.5,2 46,6.5 37,7" fill="#3ea64c"/>
<polygon points="13,8 30,5.5 51.3,6.3 36.5,10" fill="#dfe1e2"/>
<polygon points="36.5,10 51.3,6.3 51.3,50 37,62.6" fill="url(#sside8)"/>
<polygon points="40,26 48,23 48,41 40,46" fill="#dfe2e3"/>
<polygon points="13,8 36.5,10 37,62.6 17.2,55.9" fill="#e8eaea"/>
<polygon points="15.5,11.3 25.6,12 25.9,57 17.4,54.5" fill="#b3ab93"/>
<polygon points="27.3,26 33.8,26.3 34,59 27.6,57.5" fill="#cfd2d3"/>
<g fill="#1e1e1e">
<rect x="16.4" y="14.3" width="3.7" height="4.2" rx="0.8"/><rect x="21" y="14.5" width="3.7" height="4.2" rx="0.8"/>
<rect x="16.6" y="20.2" width="3.7" height="4.2" rx="0.8"/><rect x="21.2" y="20.4" width="3.7" height="4.2" rx="0.8"/>
<rect x="16.8" y="26.1" width="3.7" height="4.2" rx="0.8"/><rect x="21.4" y="26.3" width="3.7" height="4.2" rx="0.8"/>
<rect x="17" y="31.5" width="3.7" height="4.2" rx="0.8"/><rect x="21.6" y="31.7" width="3.7" height="4.2" rx="0.8"/>
<rect x="17.2" y="38.2" width="3.7" height="4" rx="0.8"/><rect x="21.8" y="38.4" width="3.7" height="4" rx="0.8"/>
<rect x="17.4" y="43.3" width="3.7" height="4" rx="0.8"/><rect x="22" y="43.5" width="3.7" height="4" rx="0.8"/>
<rect x="17.6" y="48.7" width="3.7" height="4" rx="0.8"/><rect x="22.2" y="48.9" width="3.7" height="4" rx="0.8"/>
<rect x="17.8" y="53.4" width="3.7" height="3.6" rx="0.8"/><rect x="22.4" y="53.6" width="3.7" height="3.6" rx="0.8"/>
<rect x="28.5" y="27.5" width="3.6" height="4.6"/>
<rect x="28.7" y="35.5" width="3.6" height="4.6"/><rect x="28.7" y="41" width="3.6" height="4.6"/>
<rect x="28.9" y="46.5" width="3.6" height="4.4"/><rect x="28.9" y="52" width="3.6" height="4.6"/>
</g>
<path d="M28 15 H33 M28 18 H33 M28 21 H33" stroke="#aaa" stroke-width="0.6"/>
<path d="M36.5 10 L37 62.6" stroke="#8a8e92" stroke-width="1.2"/>
</svg>
<div class="a nw ct" style="left:558px;top:622px">SysName:</div>
<div class="a nw ct" style="left:612px;top:622px"></div>
<div class="a nw ct" style="left:558px;top:638px">IP:</div>
<div class="a nw ct cb" style="left:612px;top:638px">192.168.3.9</div>
<div class="a nw ct" style="left:558px;top:653px">MAC:</div>
<div class="a nw ct" style="left:612px;top:653px">bc:9c:c5:00:2f:00</div>
<div class="a nw ct" style="left:558px;top:669px">SysUptime:</div>
<div class="a nw ct" style="left:612px;top:669px">3 days, 1:45:23.31</div>
<div class="a card" style="left:805px;top:566px;width:238px;height:135px;"><div class="ch" style="height:37px"><span class="cht" style="top:12px">192.168.2.251 csco01</span></div></div>
<svg class="a" style="left:821px;top:619px" width="64" height="67" viewBox="0 0 64 67">
<defs><linearGradient id="sbg9" x1="0" y1="0" x2="0" y2="1"><stop offset="0" stop-color="#ececec"/><stop offset="1" stop-color="#cdcdcd"/></linearGradient>
<linearGradient id="sside9" x1="0" y1="0" x2="1" y2="0"><stop offset="0" stop-color="#a4a8ab"/><stop offset="0.2" stop-color="#bfc2c5"/><stop offset="1" stop-color="#d3d6d8"/></linearGradient></defs>
<rect x="0.5" y="1.5" width="63" height="65" rx="9" fill="#8d8d8d"/>
<rect x="0" y="0" width="62.5" height="64.5" rx="9" fill="url(#sbg9)"/>
<polygon points="36.5,2.5 45.5,2 46,6.5 37,7" fill="#3ea64c"/>
<polygon points="13,8 30,5.5 51.3,6.3 36.5,10" fill="#dfe1e2"/>
<polygon points="36.5,10 51.3,6.3 51.3,50 37,62.6" fill="url(#sside9)"/>
<polygon points="40,26 48,23 48,41 40,46" fill="#dfe2e3"/>
<polygon points="13,8 36.5,10 37,62.6 17.2,55.9" fill="#e8eaea"/>
<polygon points="15.5,11.3 25.6,12 25.9,57 17.4,54.5" fill="#b3ab93"/>
<polygon points="27.3,26 33.8,26.3 34,59 27.6,57.5" fill="#cfd2d3"/>
<g fill="#1e1e1e">
<rect x="16.4" y="14.3" width="3.7" height="4.2" rx="0.8"/><rect x="21" y="14.5" width="3.7" height="4.2" rx="0.8"/>
<rect x="16.6" y="20.2" width="3.7" height="4.2" rx="0.8"/><rect x="21.2" y="20.4" width="3.7" height="4.2" rx="0.8"/>
<rect x="16.8" y="26.1" width="3.7" height="4.2" rx="0.8"/><rect x="21.4" y="26.3" width="3.7" height="4.2" rx="0.8"/>
<rect x="17" y="31.5" width="3.7" height="4.2" rx="0.8"/><rect x="21.6" y="31.7" width="3.7" height="4.2" rx="0.8"/>
<rect x="17.2" y="38.2" width="3.7" height="4" rx="0.8"/><rect x="21.8" y="38.4" width="3.7" height="4" rx="0.8"/>
<rect x="17.4" y="43.3" width="3.7" height="4" rx="0.8"/><rect x="22" y="43.5" width="3.7" height="4" rx="0.8"/>
<rect x="17.6" y="48.7" width="3.7" height="4" rx="0.8"/><rect x="22.2" y="48.9" width="3.7" height="4" rx="0.8"/>
<rect x="17.8" y="53.4" width="3.7" height="3.6" rx="0.8"/><rect x="22.4" y="53.6" width="3.7" height="3.6" rx="0.8"/>
<rect x="28.5" y="27.5" width="3.6" height="4.6"/>
<rect x="28.7" y="35.5" width="3.6" height="4.6"/><rect x="28.7" y="41" width="3.6" height="4.6"/>
<rect x="28.9" y="46.5" width="3.6" height="4.4"/><rect x="28.9" y="52" width="3.6" height="4.6"/>
</g>
<path d="M28 15 H33 M28 18 H33 M28 21 H33" stroke="#aaa" stroke-width="0.6"/>
<path d="M36.5 10 L37 62.6" stroke="#8a8e92" stroke-width="1.2"/>
</svg>
<div class="a nw ct" style="left:886px;top:622px">SysName:</div>
<div class="a nw ct" style="left:940px;top:622px">csco01</div>
<div class="a nw ct" style="left:886px;top:638px">IP:</div>
<div class="a nw ct cb" style="left:940px;top:638px">192.168.2.251</div>
<div class="a nw ct" style="left:886px;top:653px">MAC:</div>
<div class="a nw ct" style="left:940px;top:653px">00:0f:f7:3a:09:c1</div>
<div class="a nw ct" style="left:886px;top:669px">SysUptime:</div>
<div class="a nw ct" style="left:940px;top:669px">0:54:55.25</div>
<!--/CARDS-->
<!--TABLE-->
<div class="a pg" style="left:213px;top:726px;width:46px">««««</div>
<div class="a pg" style="left:260px;top:726px;width:34px">««</div>
<div class="a pg" style="left:295px;top:726px;width:28px">«</div>
<div class="a pg" style="left:325px;top:726px;width:28px">»</div>
<div class="a pg" style="left:354px;top:726px;width:34px">»»</div>
<div class="a pg" style="left:389px;top:726px;width:46px">»»»»</div>
<div class="a" style="left:265px;top:786px;width:1298px;height:1px;background:#ddd"></div>
<div class="a" style="left:212px;top:750px;width:54px;height:37px;border:1px solid #ddd;border-bottom:none;border-radius:4px 4px 0 0;background:#fff"></div>
<div class="a nw" style="left:228px;top:760px;font-size:12px;color:#555">告警</div>
<svg class="a" style="left:1488px;top:761px" width="13" height="13" viewBox="0 0 13 13"><circle cx="6.5" cy="6.5" r="5.2" fill="none" stroke="#1a74d0" stroke-width="1.6"/><path d="M6.5 3.5 V6.8 H9" fill="none" stroke="#1a74d0" stroke-width="1.4"/></svg>
<svg class="a" style="left:1533px;top:761px" width="13" height="13" viewBox="0 0 13 13"><path d="M2 6 A4.6 4.6 0 0 1 10.3 3.6" fill="none" stroke="#1a74d0" stroke-width="1.7"/><path d="M11.5 0.8 V5 H7.3 Z" fill="#1a74d0"/><path d="M11 7 A4.6 4.6 0 0 1 2.7 9.4" fill="none" stroke="#1a74d0" stroke-width="1.7"/><path d="M1.5 12.2 V8 H5.7 Z" fill="#1a74d0"/></svg>
<div class="a" style="left:212px;top:799px;width:1351px;height:153px;border-top:1px solid #ddd"></div>
<div class="a" style="left:212px;top:828px;width:1350px;height:39px;background:#f9f9f9"></div>
<div class="a" style="left:212px;top:906px;width:1350px;height:40px;background:#f9f9f9"></div>
<div class="a" style="left:212px;top:826px;width:1351px;height:2px;background:#ddd"></div>
<div class="a" style="left:212px;top:867px;width:1351px;height:1px;background:#ddd"></div>
<div class="a" style="left:212px;top:906px;width:1351px;height:1px;background:#ddd"></div>
<div class="a" style="left:212px;top:946px;width:1351px;height:1px;background:#ddd"></div>
<div class="a" style="left:212px;top:799px;width:1px;height:153px;background:#ddd"></div>
<div class="a" style="left:264px;top:799px;width:1px;height:153px;background:#ddd"></div>
<div class="a" style="left:550px;top:799px;width:1px;height:153px;background:#ddd"></div>
<div class="a" style="left:629px;top:799px;width:1px;height:153px;background:#ddd"></div>
<div class="a" style="left:779px;top:799px;width:1px;height:153px;background:#ddd"></div>
<div class="a" style="left:990px;top:799px;width:1px;height:153px;background:#ddd"></div>
<div class="a" style="left:1117px;top:799px;width:1px;height:153px;background:#ddd"></div>
<div class="a" style="left:1169px;top:799px;width:1px;height:153px;background:#ddd"></div>
<div class="a" style="left:1291px;top:799px;width:1px;height:153px;background:#ddd"></div>
<div class="a" style="left:1437px;top:799px;width:1px;height:153px;background:#ddd"></div>
<div class="a" style="left:1541px;top:799px;width:1px;height:153px;background:#ddd"></div>
<div class="a" style="left:1562px;top:799px;width:1px;height:153px;background:#ddd"></div>
<div class="a nw th" style="left:212px;top:806px;width:52px">索引</div>
<div class="a nw th" style="left:264px;top:806px;width:286px">设备</div>
<div class="a nw th" style="left:550px;top:806px;width:79px">级别</div>
<div class="a nw th" style="left:629px;top:806px;width:150px">接收时间</div>
<div class="a nw th" style="left:779px;top:806px;width:211px">触发时间</div>
<div class="a nw th" style="left:990px;top:806px;width:127px">IP</div>
<div class="a nw th" style="left:1117px;top:806px;width:52px">端口</div>
<div class="a nw th" style="left:1169px;top:806px;width:122px">内容</div>
<div class="a nw th" style="left:1291px;top:806px;width:146px">说明</div>
<div class="a nw td" style="left:218px;top:834px">307</div>
<div class="a nw td" style="left:270px;top:834px">N/A</div>
<div class="a ib" style="left:557px;top:833px;height:15px;line-height:14px">i</div>
<div class="a nw td" style="left:573px;width:50px;text-align:right;top:835px;color:#2f922f;font-size:10.8px;transform:scaleX(0.86);transform-origin:right center">INFO</div>
<div class="a nw td" style="left:635px;top:834px">17-7-16 下午3:50</div>
<div class="a nw td" style="left:785px;top:834px">2017-07-16 15:50:19.691</div>
<div class="a nw td" style="left:996px;top:834px">192.168.3.5</div>
<div class="a nw td" style="left:1123px;top:834px">162</div>
<div class="a nw td" style="left:1175px;top:834px">Device Online</div>
<div class="a nw td" style="left:1297px;top:834px">Device Re-online</div>
<div class="a btn" style="left:1443px;top:833px">未处理</div>
<div class="a nw td" style="left:218px;top:873px">306</div>
<div class="a nw td" style="left:270px;top:873px">N/A</div>
<div class="a ib" style="left:557px;top:872px;height:15px;line-height:14px">i</div>
<div class="a nw td" style="left:573px;width:50px;text-align:right;top:874px;color:#2f922f;font-size:10.8px;transform:scaleX(0.86);transform-origin:right center">INFO</div>
<div class="a nw td" style="left:635px;top:873px">17-7-16 下午3:50</div>
<div class="a nw td" style="left:785px;top:873px">2017-07-16 15:50:19.673</div>
<div class="a nw td" style="left:996px;top:873px">192.168.3.5</div>
<div class="a nw td" style="left:1123px;top:873px">162</div>
<div class="a nw td" style="left:1175px;top:873px">Device Online</div>
<div class="a nw td" style="left:1297px;top:873px">Device Re-online</div>
<div class="a btn" style="left:1443px;top:872px">未处理</div>
<div class="a nw td" style="left:218px;top:912px">303</div>
<div class="a nw td" style="left:270px;top:912px">csco02</div>
<div class="a ib" style="left:557px;top:911px;height:15px;line-height:14px">i</div>
<div class="a nw td" style="left:573px;width:50px;text-align:right;top:913px;color:#2f922f;font-size:10.8px;transform:scaleX(0.86);transform-origin:right center">INFO</div>
<div class="a nw td" style="left:635px;top:912px">17-7-16 下午3:50</div>
<div class="a nw td" style="left:785px;top:912px">2017-07-16 15:50:19.462</div>
<div class="a nw td" style="left:996px;top:912px">192.168.2.252</div>
<div class="a nw td" style="left:1123px;top:912px">162</div>
<div class="a nw td" style="left:1175px;top:912px">Device Online</div>
<div class="a nw td" style="left:1297px;top:912px">Device Re-online</div>
<div class="a btn" style="left:1443px;top:911px">未处理</div>
<!--/TABLE-->
<div id="rpanel" class="a"><!--TREE-->
<div class="a" style="left:0;top:0;width:180px;height:38px;background:#c4d1e1;border-radius:4px 4px 0 0"></div>
<div class="a nw" style="left:15px;top:12px;font-size:14px;font-weight:bold;color:#333">设备 (9/9)</div>
<svg class="a" style="left:153px;top:11px" width="13" height="13" viewBox="0 0 13 13"><path d="M2 6 A4.6 4.6 0 0 1 10.3 3.6" fill="none" stroke="#1a74d0" stroke-width="1.7"/><path d="M11.5 0.8 V5 H7.3 Z" fill="#1a74d0"/><path d="M11 7 A4.6 4.6 0 0 1 2.7 9.4" fill="none" stroke="#1a74d0" stroke-width="1.7"/><path d="M1.5 12.2 V8 H5.7 Z" fill="#1a74d0"/></svg>
<div class="a" style="left:7px;top:38px;width:1px;height:8px;background:#d6d2c6"></div>
<div class="a" style="left:23px;top:63px;width:1px;height:210px;background:#d6d2c6"></div>
<div class="a" style="left:39px;top:89px;width:1px;height:63px;background:#d6d2c6"></div>
<div class="a" style="left:39px;top:190px;width:1px;height:64px;background:#d6d2c6"></div>
<div class="a" style="left:39px;top:291px;width:1px;height:64px;background:#d6d2c6"></div>
<div class="a" style="left:3px;top:46px;width:9px;height:9px;border:1px solid #d9d5ca;background:#fcfcfc"></div>
<div class="a" style="left:5px;top:50px;width:5px;height:1.4px;background:#222"></div>
<div class="a" style="left:12px;top:50px;width:4px;height:1px;background:#d6d2c6"></div>
<svg class="a" style="left:16px;top:43px" width="16" height="16" viewBox="0 0 16 16"><rect x="0" y="0" width="16" height="16" fill="#fbfbfb"/><rect x="0" y="1" width="16" height="13" fill="#c5c6ca"/><path d="M1 12 L2.5 5.5 L5 4.5 V12 Z" fill="#444"/><g fill="#151515"><rect x="5.5" y="4.6" width="2.2" height="2.2"/><rect x="8.5" y="4.6" width="2.2" height="2.2"/><rect x="11.5" y="4.6" width="2.2" height="2.2"/><rect x="5.5" y="8.2" width="2.2" height="2.2"/><rect x="8.5" y="8.2" width="2.2" height="2.2"/><rect x="11.5" y="8.2" width="2.2" height="2.2"/><rect x="14.3" y="5" width="1.3" height="5.5"/></g><path d="M5 11.5 H15" stroke="#a8a8b0" stroke-width="0.8"/></svg>
<div class="a nw tl" style="left:34px;top:44px">Network</div>
<div class="a" style="left:19px;top:71px;width:9px;height:9px;border:1px solid #d9d5ca;background:#fcfcfc"></div>
<div class="a" style="left:21px;top:75px;width:5px;height:1.4px;background:#222"></div>
<div class="a" style="left:28px;top:75px;width:4px;height:1px;background:#d6d2c6"></div>
<svg class="a" style="left:32px;top:68px" width="16" height="16" viewBox="0 0 16 16"><rect x="0" y="0" width="16" height="16" fill="#fbfbfb"/><rect x="0" y="1" width="16" height="13" fill="#c5c6ca"/><path d="M1 12 L2.5 5.5 L5 4.5 V12 Z" fill="#444"/><g fill="#151515"><rect x="5.5" y="4.6" width="2.2" height="2.2"/><rect x="8.5" y="4.6" width="2.2" height="2.2"/><rect x="11.5" y="4.6" width="2.2" height="2.2"/><rect x="5.5" y="8.2" width="2.2" height="2.2"/><rect x="8.5" y="8.2" width="2.2" height="2.2"/><rect x="11.5" y="8.2" width="2.2" height="2.2"/><rect x="14.3" y="5" width="1.3" height="5.5"/></g><path d="M5 11.5 H15" stroke="#a8a8b0" stroke-width="0.8"/></svg>
<div class="a nw tl" style="left:50px;top:70px">Server</div>
<div class="a" style="left:39px;top:100px;width:9px;height:1px;background:#d6d2c6"></div>
<svg class="a" style="left:48px;top:93px" width="16" height="16" viewBox="0 0 16 16"><rect x="0.5" y="0.5" width="15" height="15" rx="2.5" fill="#d9d9d9"/><rect x="0.5" y="13.8" width="15" height="1.8" rx="1" fill="#a0a0a0"/><polygon points="3,3 9.5,2 9.5,15 4,13.5" fill="#f2f3f3"/><polygon points="9.5,2 12.8,1.2 12.8,11.5 9.5,15" fill="#8f9294"/><path d="M3.9 4 V12.5" stroke="#151515" stroke-width="1.5"/><circle cx="7.2" cy="9.2" r="0.8" fill="#222"/><rect x="10" y="0.6" width="2.2" height="1.6" fill="#3aa04a"/></svg>
<div class="a nw tl" style="left:67px;top:95px">192.168.1.222</div>
<div class="a" style="left:39px;top:126px;width:9px;height:1px;background:#d6d2c6"></div>
<svg class="a" style="left:48px;top:118px" width="16" height="16" viewBox="0 0 16 16"><rect x="0.5" y="0.5" width="15" height="15" rx="2.5" fill="#d9d9d9"/><rect x="0.5" y="13.8" width="15" height="1.8" rx="1" fill="#a0a0a0"/><polygon points="3,3 9.5,2 9.5,15 4,13.5" fill="#f2f3f3"/><polygon points="9.5,2 12.8,1.2 12.8,11.5 9.5,15" fill="#8f9294"/><path d="M3.9 4 V12.5" stroke="#151515" stroke-width="1.5"/><circle cx="7.2" cy="9.2" r="0.8" fill="#222"/><rect x="10" y="0.6" width="2.2" height="1.6" fill="#3aa04a"/></svg>
<div class="a nw tl" style="left:67px;top:120px">127.0.0.1</div>
<div class="a" style="left:39px;top:151px;width:9px;height:1px;background:#d6d2c6"></div>
<svg class="a" style="left:48px;top:143px" width="16" height="16" viewBox="0 0 16 16"><rect x="0.5" y="0.5" width="15" height="15" rx="2.5" fill="#d9d9d9"/><rect x="0.5" y="13.8" width="15" height="1.8" rx="1" fill="#a0a0a0"/><polygon points="3,3 9.5,2 9.5,15 4,13.5" fill="#f2f3f3"/><polygon points="9.5,2 12.8,1.2 12.8,11.5 9.5,15" fill="#8f9294"/><path d="M3.9 4 V12.5" stroke="#151515" stroke-width="1.5"/><circle cx="7.2" cy="9.2" r="0.8" fill="#222"/><rect x="10" y="0.6" width="2.2" height="1.6" fill="#3aa04a"/></svg>
<div class="a nw tl" style="left:67px;top:145px">192.168.1.200</div>
<div class="a" style="left:19px;top:172px;width:9px;height:9px;border:1px solid #d9d5ca;background:#fcfcfc"></div>
<div class="a" style="left:21px;top:176px;width:5px;height:1.4px;background:#222"></div>
<div class="a" style="left:28px;top:176px;width:4px;height:1px;background:#d6d2c6"></div>
<svg class="a" style="left:32px;top:169px" width="16" height="16" viewBox="0 0 16 16"><rect x="0" y="0" width="16" height="16" fill="#fbfbfb"/><rect x="0" y="1" width="16" height="13" fill="#c5c6ca"/><path d="M1 12 L2.5 5.5 L5 4.5 V12 Z" fill="#444"/><g fill="#151515"><rect x="5.5" y="4.6" width="2.2" height="2.2"/><rect x="8.5" y="4.6" width="2.2" height="2.2"/><rect x="11.5" y="4.6" width="2.2" height="2.2"/><rect x="5.5" y="8.2" width="2.2" height="2.2"/><rect x="8.5" y="8.2" width="2.2" height="2.2"/><rect x="11.5" y="8.2" width="2.2" height="2.2"/><rect x="14.3" y="5" width="1.3" height="5.5"/></g><path d="M5 11.5 H15" stroke="#a8a8b0" stroke-width="0.8"/></svg>
<div class="a nw tl" style="left:50px;top:171px">华飞</div>
<div class="a" style="left:39px;top:202px;width:9px;height:1px;background:#d6d2c6"></div>
<svg class="a" style="left:48px;top:194px" width="16" height="16" viewBox="0 0 16 16"><rect x="0.5" y="0.5" width="15" height="15" rx="2.5" fill="#d9d9d9"/><rect x="0.5" y="13.8" width="15" height="1.8" rx="1" fill="#a0a0a0"/><polygon points="3,3 9.5,2 9.5,15 4,13.5" fill="#f2f3f3"/><polygon points="9.5,2 12.8,1.2 12.8,11.5 9.5,15" fill="#8f9294"/><path d="M3.9 4 V12.5" stroke="#151515" stroke-width="1.5"/><circle cx="7.2" cy="9.2" r="0.8" fill="#222"/><rect x="10" y="0.6" width="2.2" height="1.6" fill="#3aa04a"/></svg>
<div class="a nw tl" style="left:67px;top:196px">192.168.3.5</div>
<div class="a" style="left:39px;top:227px;width:9px;height:1px;background:#d6d2c6"></div>
<svg class="a" style="left:48px;top:219px" width="16" height="16" viewBox="0 0 16 16"><rect x="0.5" y="0.5" width="15" height="15" rx="2.5" fill="#d9d9d9"/><rect x="0.5" y="13.8" width="15" height="1.8" rx="1" fill="#a0a0a0"/><polygon points="3,3 9.5,2 9.5,15 4,13.5" fill="#f2f3f3"/><polygon points="9.5,2 12.8,1.2 12.8,11.5 9.5,15" fill="#8f9294"/><path d="M3.9 4 V12.5" stroke="#151515" stroke-width="1.5"/><circle cx="7.2" cy="9.2" r="0.8" fill="#222"/><rect x="10" y="0.6" width="2.2" height="1.6" fill="#3aa04a"/></svg>
<div class="a nw tl" style="left:67px;top:221px">192.168.3.2</div>
<div class="a" style="left:39px;top:252px;width:9px;height:1px;background:#d6d2c6"></div>
<svg class="a" style="left:48px;top:245px" width="16" height="16" viewBox="0 0 16 16"><rect x="0.5" y="0.5" width="15" height="15" rx="2.5" fill="#d9d9d9"/><rect x="0.5" y="13.8" width="15" height="1.8" rx="1" fill="#a0a0a0"/><polygon points="3,3 9.5,2 9.5,15 4,13.5" fill="#f2f3f3"/><polygon points="9.5,2 12.8,1.2 12.8,11.5 9.5,15" fill="#8f9294"/><path d="M3.9 4 V12.5" stroke="#151515" stroke-width="1.5"/><circle cx="7.2" cy="9.2" r="0.8" fill="#222"/><rect x="10" y="0.6" width="2.2" height="1.6" fill="#3aa04a"/></svg>
<div class="a nw tl" style="left:67px;top:247px">192.168.3.9</div>
<div class="a" style="left:19px;top:273px;width:9px;height:9px;border:1px solid #d9d5ca;background:#fcfcfc"></div>
<div class="a" style="left:21px;top:277px;width:5px;height:1.4px;background:#222"></div>
<div class="a" style="left:28px;top:277px;width:4px;height:1px;background:#d6d2c6"></div>
<svg class="a" style="left:32px;top:270px" width="16" height="16" viewBox="0 0 16 16"><rect x="0" y="0" width="16" height="16" fill="#fbfbfb"/><rect x="0" y="1" width="16" height="13" fill="#c5c6ca"/><path d="M1 12 L2.5 5.5 L5 4.5 V12 Z" fill="#444"/><g fill="#151515"><rect x="5.5" y="4.6" width="2.2" height="2.2"/><rect x="8.5" y="4.6" width="2.2" height="2.2"/><rect x="11.5" y="4.6" width="2.2" height="2.2"/><rect x="5.5" y="8.2" width="2.2" height="2.2"/><rect x="8.5" y="8.2" width="2.2" height="2.2"/><rect x="11.5" y="8.2" width="2.2" height="2.2"/><rect x="14.3" y="5" width="1.3" height="5.5"/></g><path d="M5 11.5 H15" stroke="#a8a8b0" stroke-width="0.8"/></svg>
<div class="a nw tl" style="left:50px;top:272px">CISCO</div>
<div class="a" style="left:39px;top:303px;width:9px;height:1px;background:#d6d2c6"></div>
<svg class="a" style="left:48px;top:295px" width="16" height="16" viewBox="0 0 16 16"><rect x="0.5" y="0.5" width="15" height="15" rx="2.5" fill="#d9d9d9"/><rect x="0.5" y="13.8" width="15" height="1.8" rx="1" fill="#a0a0a0"/><polygon points="3,3 9.5,2 9.5,15 4,13.5" fill="#f2f3f3"/><polygon points="9.5,2 12.8,1.2 12.8,11.5 9.5,15" fill="#8f9294"/><path d="M3.9 4 V12.5" stroke="#151515" stroke-width="1.5"/><circle cx="7.2" cy="9.2" r="0.8" fill="#222"/><rect x="10" y="0.6" width="2.2" height="1.6" fill="#3aa04a"/></svg>
<div class="a nw tl" style="left:67px;top:297px">192.168.2.253</div>
<div class="a" style="left:39px;top:328px;width:9px;height:1px;background:#d6d2c6"></div>
<svg class="a" style="left:48px;top:320px" width="16" height="16" viewBox="0 0 16 16"><rect x="0.5" y="0.5" width="15" height="15" rx="2.5" fill="#d9d9d9"/><rect x="0.5" y="13.8" width="15" height="1.8" rx="1" fill="#a0a0a0"/><polygon points="3,3 9.5,2 9.5,15 4,13.5" fill="#f2f3f3"/><polygon points="9.5,2 12.8,1.2 12.8,11.5 9.5,15" fill="#8f9294"/><path d="M3.9 4 V12.5" stroke="#151515" stroke-width="1.5"/><circle cx="7.2" cy="9.2" r="0.8" fill="#222"/><rect x="10" y="0.6" width="2.2" height="1.6" fill="#3aa04a"/></svg>
<div class="a nw tl" style="left:67px;top:322px">192.168.2.252</div>
<div class="a" style="left:39px;top:353px;width:9px;height:1px;background:#d6d2c6"></div>
<svg class="a" style="left:48px;top:346px" width="16" height="16" viewBox="0 0 16 16"><rect x="0.5" y="0.5" width="15" height="15" rx="2.5" fill="#d9d9d9"/><rect x="0.5" y="13.8" width="15" height="1.8" rx="1" fill="#a0a0a0"/><polygon points="3,3 9.5,2 9.5,15 4,13.5" fill="#f2f3f3"/><polygon points="9.5,2 12.8,1.2 12.8,11.5 9.5,15" fill="#8f9294"/><path d="M3.9 4 V12.5" stroke="#151515" stroke-width="1.5"/><circle cx="7.2" cy="9.2" r="0.8" fill="#222"/><rect x="10" y="0.6" width="2.2" height="1.6" fill="#3aa04a"/></svg>
<div class="a nw tl" style="left:67px;top:348px">192.168.2.251</div>
<!--/TREE--></div>
<div id="scroll" class="a">
  <svg class="a" style="left:5px;top:8px" width="10" height="6" viewBox="0 0 10 6"><path d="M5 0 L10 6 H0 Z" fill="#333"/></svg>
  <div class="a" style="left:1px;top:23px;width:19px;height:503px;border:1px solid #8a8a8a;border-radius:3px;background:linear-gradient(90deg,#f7f7f7 0%,#f0f0f0 30%,#dcdcde 35%,#d6d6d9 80%,#c6c6ca 95%,#e0e0e0 100%)"></div>
  <div class="a" style="left:6px;top:269px;width:9px;height:2px;background:#444;box-shadow:0 4px 0 #444,0 8px 0 #444"></div>
  <svg class="a" style="left:5px;top:827px" width="10" height="6" viewBox="0 0 10 6"><path d="M0 0 H10 L5 6 Z" fill="#333"/></svg>
</div>
</body></html>
